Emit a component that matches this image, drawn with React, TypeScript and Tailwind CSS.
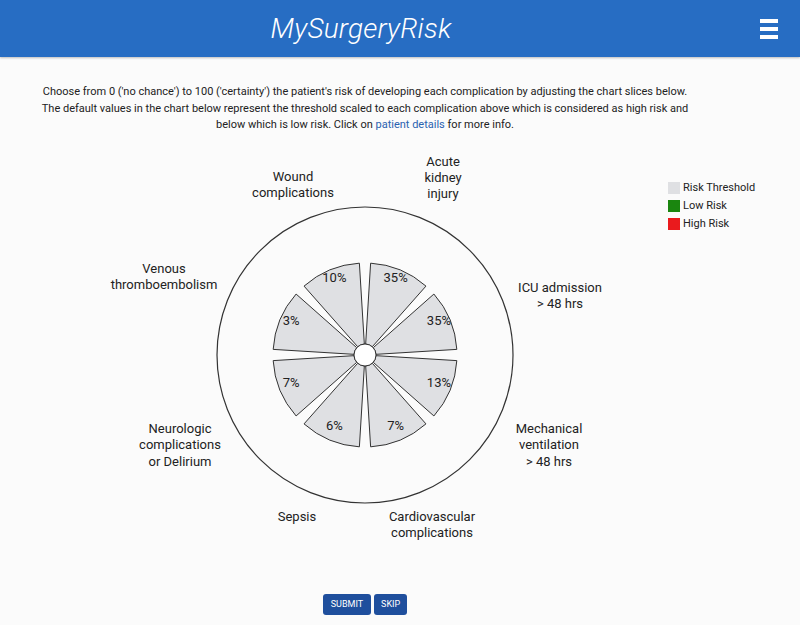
import React from "react";

const CX = 365;
const CY = 215;
const R_OUT = 92;
const R_IN = 11;
const PAD = 3.5;

const slices = [
  { value: "35%" },
  { value: "35%" },
  { value: "13%" },
  { value: "7%" },
  { value: "6%" },
  { value: "7%" },
  { value: "3%" },
  { value: "10%" },
];

const labels: { x: number; ys: number[]; lines: string[] }[] = [
  { x: 293, ys: [41, 57], lines: ["Wound", "complications"] },
  { x: 443, ys: [26, 42, 58], lines: ["Acute", "kidney", "injury"] },
  { x: 560, ys: [152, 168], lines: ["ICU admission", "> 48 hrs"] },
  { x: 164, ys: [133, 149], lines: ["Venous", "thromboembolism"] },
  { x: 549, ys: [293, 309, 326], lines: ["Mechanical", "ventilation", "> 48 hrs"] },
  { x: 180, ys: [293, 309, 326], lines: ["Neurologic", "complications", "or Delirium"] },
  { x: 297, ys: [381], lines: ["Sepsis"] },
  { x: 432, ys: [381, 397], lines: ["Cardiovascular", "complications"] },
];

function pt(r: number, deg: number) {
  const a = (deg * Math.PI) / 180;
  return [CX + r * Math.sin(a), CY - r * Math.cos(a)];
}

function slicePath(i: number) {
  const a0 = i * 45 + PAD;
  const a1 = (i + 1) * 45 - PAD;
  const [x0, y0] = pt(R_OUT, a0);
  const [x1, y1] = pt(R_OUT, a1);
  const [x2, y2] = pt(R_IN, a1);
  const [x3, y3] = pt(R_IN, a0);
  return `M${x0},${y0} A${R_OUT},${R_OUT} 0 0 1 ${x1},${y1} L${x2},${y2} A${R_IN},${R_IN} 0 0 0 ${x3},${y3} Z`;
}

function RiskChart() {
  return (
    <svg width="730" height="420" className="block" style={{ fontFamily: "Roboto, 'Liberation Sans', sans-serif" }}>
      <circle cx={CX} cy={CY} r={148} fill="none" stroke="#333" strokeWidth={1.2} />
      {slices.map((s, i) => {
        const [tx, ty] = pt(80, i * 45 + 22.5);
        return (
          <g key={i}>
            <path d={slicePath(i)} fill="#dfe0e3" stroke="#333" strokeWidth={1} />
            <text x={tx} y={ty + 1} textAnchor="middle" fontSize="13" fill="#222">
              {s.value}
            </text>
          </g>
        );
      })}
      <circle cx={CX} cy={CY} r={R_IN} fill="#fff" stroke="#333" strokeWidth={1} />
      {labels.map((l, i) =>
        l.lines.map((line, j) => (
          <text key={`${i}-${j}`} x={l.x} y={l.ys[j]} textAnchor="middle" fontSize="13" fill="#222">
            {line}
          </text>
        ))
      )}
    </svg>
  );
}

export default function App() {
  return (
    <div className="min-h-[625px] bg-[#fbfbfb] text-[#222]" style={{ fontFamily: "Roboto, 'Liberation Sans', sans-serif" }}>
      <header className="h-[57px] bg-[#276dc3] shadow-[0_1px_2px_rgba(0,0,0,0.25)] flex items-center relative">
        <div className="w-[730px] flex justify-center">
          <h1 className="text-[28px] italic font-light text-white tracking-[0.2px] pr-2">MySurgeryRisk</h1>
        </div>
        <div className="ml-auto mr-[22px] flex flex-col gap-[4px]">
          <span className="block w-[18px] h-[4px] bg-white" />
          <span className="block w-[18px] h-[4px] bg-white" />
          <span className="block w-[18px] h-[4px] bg-white" />
        </div>
      </header>

      <div className="flex">
        <div className="w-[730px] flex flex-col items-center">
          <p className="mt-[27px] text-[11px] leading-[16.5px] text-center text-[#222]">
            Choose from 0 ('no chance') to 100 ('certainty') the patient's risk of developing each complication by adjusting the chart slices below.
            <br />
            The default values in the chart below represent the threshold scaled to each complication above which is considered as high risk and
            <br />
            below which is low risk. Click on <a className="text-[#2a62b0] cursor-pointer">patient details</a> for more info.
          </p>

          <div className="mt-[6px]">
            <RiskChart />
          </div>

          <div className="mt-[34px] flex gap-[3px]">
            <button className="h-[21px] px-[8px] rounded-[3px] bg-[#1f4f9d] text-white text-[9px] leading-none">SUBMIT</button>
            <button className="h-[21px] px-[7px] rounded-[3px] bg-[#1f4f9d] text-white text-[9px] leading-none">SKIP</button>
          </div>
        </div>

        <div className="ml-[-62px] mt-[125px] flex flex-col gap-[6px] text-[11px] leading-[12px] text-[#222]">
          <div className="flex items-center gap-[3px]">
            <span className="w-[12px] h-[12px] bg-[#dfe0e3]" />
            <span>Risk Threshold</span>
          </div>
          <div className="flex items-center gap-[3px]">
            <span className="w-[12px] h-[12px] bg-[#1a860f]" />
            <span>Low Risk</span>
          </div>
          <div className="flex items-center gap-[3px]">
            <span className="w-[12px] h-[12px] bg-[#ea1a1d]" />
            <span>High Risk</span>
          </div>
        </div>
      </div>
    </div>
  );
}
